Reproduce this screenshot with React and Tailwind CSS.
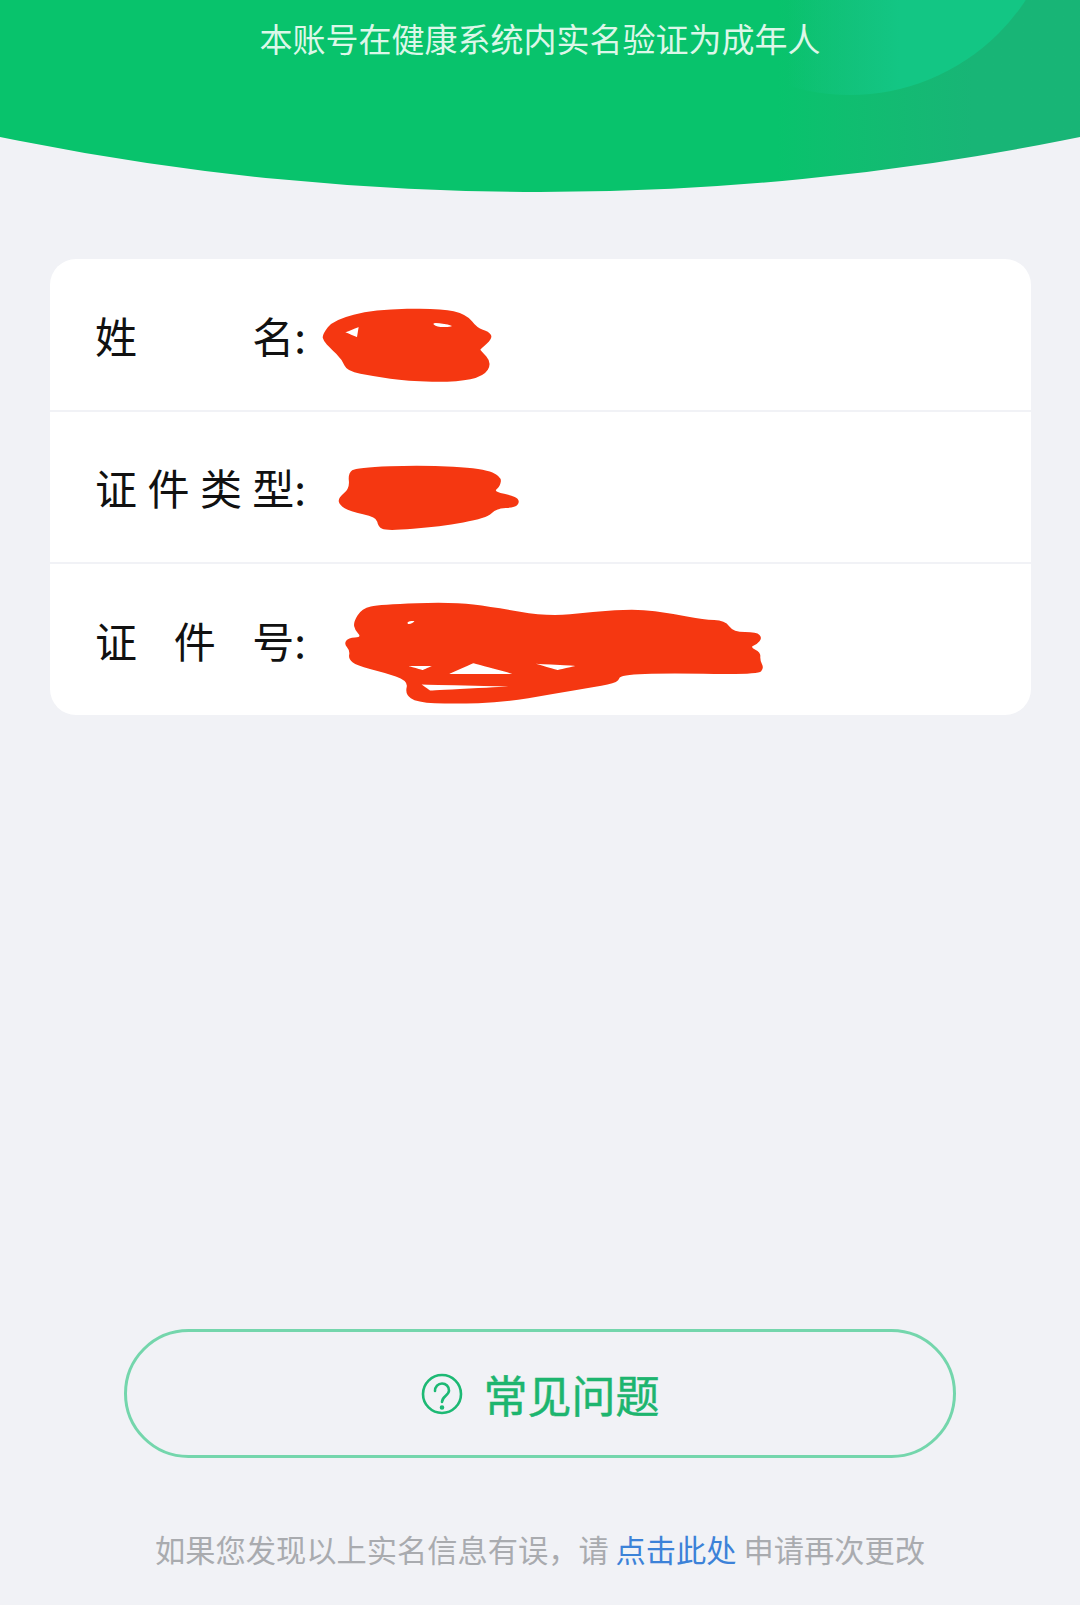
import React from 'react';

const RED = '#f53711';

// closes a list of points into a smooth blob (quadratic through the midpoints)
// a point listed twice stays a sharp corner
const blob = (pts) => {
  const mid = (a, b) => [(a[0] + b[0]) / 2, (a[1] + b[1]) / 2];
  const start = mid(pts[pts.length - 1], pts[0]);
  let d = `M${start[0]} ${start[1]}`;
  pts.forEach((p, i) => {
    const m = mid(p, pts[(i + 1) % pts.length]);
    d += `Q${p[0]} ${p[1]} ${m[0]} ${m[1]}`;
  });
  return d + 'Z';
};

const Scribble = ({ className, viewBox, outline, holes = [] }) => (
  <svg className={className} viewBox={viewBox} preserveAspectRatio="none">
    <path fillRule="evenodd" fill={RED} d={[outline, ...holes].map(blob).join('')} />
  </svg>
);

const nameOutline = [[845, 255], [880, 210], [1000, 180], [1200, 175], [1280, 195], [1310, 235], [1345, 245], [1358, 265], [1320, 300], [1320, 300], [1355, 340], [1330, 380], [1250, 397], [1100, 395], [1000, 380], [920, 365], [905, 330], [870, 295], [850, 275]];
const nameHoles = [
  [[915, 248], [915, 248], [955, 232], [955, 232], [950, 262], [950, 262]],
  [[1172, 216], [1252, 230], [1190, 234]],
];

const typeOutline = [[895, 745], [930, 715], [925, 670], [950, 652], [1150, 645], [1330, 655], [1385, 680], [1380, 710], [1360, 725], [1425, 738], [1440, 755], [1425, 773], [1370, 775], [1340, 805], [1200, 830], [1040, 843], [1015, 830], [1010, 800], [930, 785], [900, 765]];

const idOutline = [[100, 125], [125, 85], [180, 72], [400, 65], [520, 80], [680, 108], [820, 95], [950, 85], [1060, 100], [1150, 118], [1215, 120], [1240, 155], [1310, 155], [1327, 172], [1310, 192], [1290, 200], [1322, 215], [1320, 240], [1332, 262], [1315, 282], [1050, 278], [900, 282], [895, 305], [830, 318], [700, 340], [550, 365], [400, 370], [290, 365], [255, 340], [265, 300], [190, 275], [110, 255], [85, 235], [90, 210], [72, 190], [85, 172], [125, 170], [105, 150]];
const idHoles = [
  [[266, 256], [266, 256], [335, 256], [335, 256], [308, 268], [308, 268]],
  [[388, 280], [388, 280], [460, 248], [460, 248], [578, 280], [578, 280]],
  [[648, 250], [648, 250], [765, 256], [765, 256], [712, 268], [712, 268]],
  [[305, 312], [305, 312], [565, 318], [565, 318], [330, 330], [330, 330]],
  [[260, 124], [290, 120], [266, 134]],
];

const Label = ({ chars }) => (
  <div className="flex w-[211px] justify-between text-[42px] leading-none text-[#111111]">
    {chars.map((c) => (
      <span key={c}>{c}</span>
    ))}
  </div>
);

const App = () => {
  return (
    <div className="flex h-[1605px] w-[1080px] flex-col overflow-hidden bg-[#f1f2f6] font-['Noto_Sans_CJK_SC',sans-serif]">
      <div className="relative h-[192px] shrink-0 overflow-hidden pt-[16px] [clip-path:circle(2678px_at_50%_-2486px)]">
        <div className="absolute inset-0 bg-gradient-to-r from-[#08c36c] from-[72%] to-[#18b576] to-[90%]" />
        <div className="absolute left-[640px] top-[-325px] h-[420px] w-[420px] rounded-full bg-gradient-to-r from-transparent from-[35%] to-[#13c684] to-[62%]" />
        <div className="relative text-center text-[33px] leading-[44px] text-[#dcf7e8]">本账号在健康系统内实名验证为成年人</div>
      </div>

      <div className="ml-[50px] mr-[49px] mt-[67px] flex flex-col rounded-[26px] bg-white">
        <div className="relative flex h-[153px] items-center border-b-2 border-[#f1f2f6] pl-[45px]">
          <Label chars={['姓', '名:']} />
          <Scribble className="absolute left-[272px] top-[49px] h-[74px] w-[171px]" viewBox="845 175 513 222" outline={nameOutline} holes={nameHoles} />
        </div>
        <div className="relative flex h-[152px] items-center border-b-2 border-[#f1f2f6] pl-[45px]">
          <Label chars={['证', '件', '类', '型:']} />
          <Scribble className="absolute left-[288px] top-[53px] h-[66px] w-[182px]" viewBox="895 645 545 198" outline={typeOutline} />
        </div>
        <div className="relative flex h-[151px] items-center pl-[45px]">
          <Label chars={['证', '件', '号:']} />
          <Scribble className="absolute left-[294px] top-[38px] h-[102px] w-[420px]" viewBox="72 65 1260 305" outline={idOutline} holes={idHoles} />
        </div>
      </div>

      <div className="mx-[124px] mt-[614px] flex h-[129px] items-center justify-center gap-[21px] rounded-full border-[3px] border-[#74d6ac]">
        <svg className="h-[42px] w-[42px] text-[#1db974]" viewBox="0 0 42 42" fill="none" stroke="currentColor" strokeWidth="2.6" strokeLinecap="round">
          <circle cx="21" cy="21" r="19" />
          <path d="M14 18c0-4.200 3-7.500 7-7.500s7 3 7 7c0 5-7 5.500-7 11.500" />
          <circle cx="21" cy="34.500" r="1" fill="currentColor" />
        </svg>
        <span className="text-[44px] leading-none text-[#1db56f] [-webkit-text-stroke:0.5px_#1db56f]">常见问题</span>
      </div>

      <div className="mt-[71px] text-center text-[30.25px] leading-[40px] text-[#a9abaf]">
        如果您发现以上实名信息有误，请 <span className="text-[#3c82d8]">点击此处</span> 申请再次更改
      </div>
    </div>
  );
};

export default App;
